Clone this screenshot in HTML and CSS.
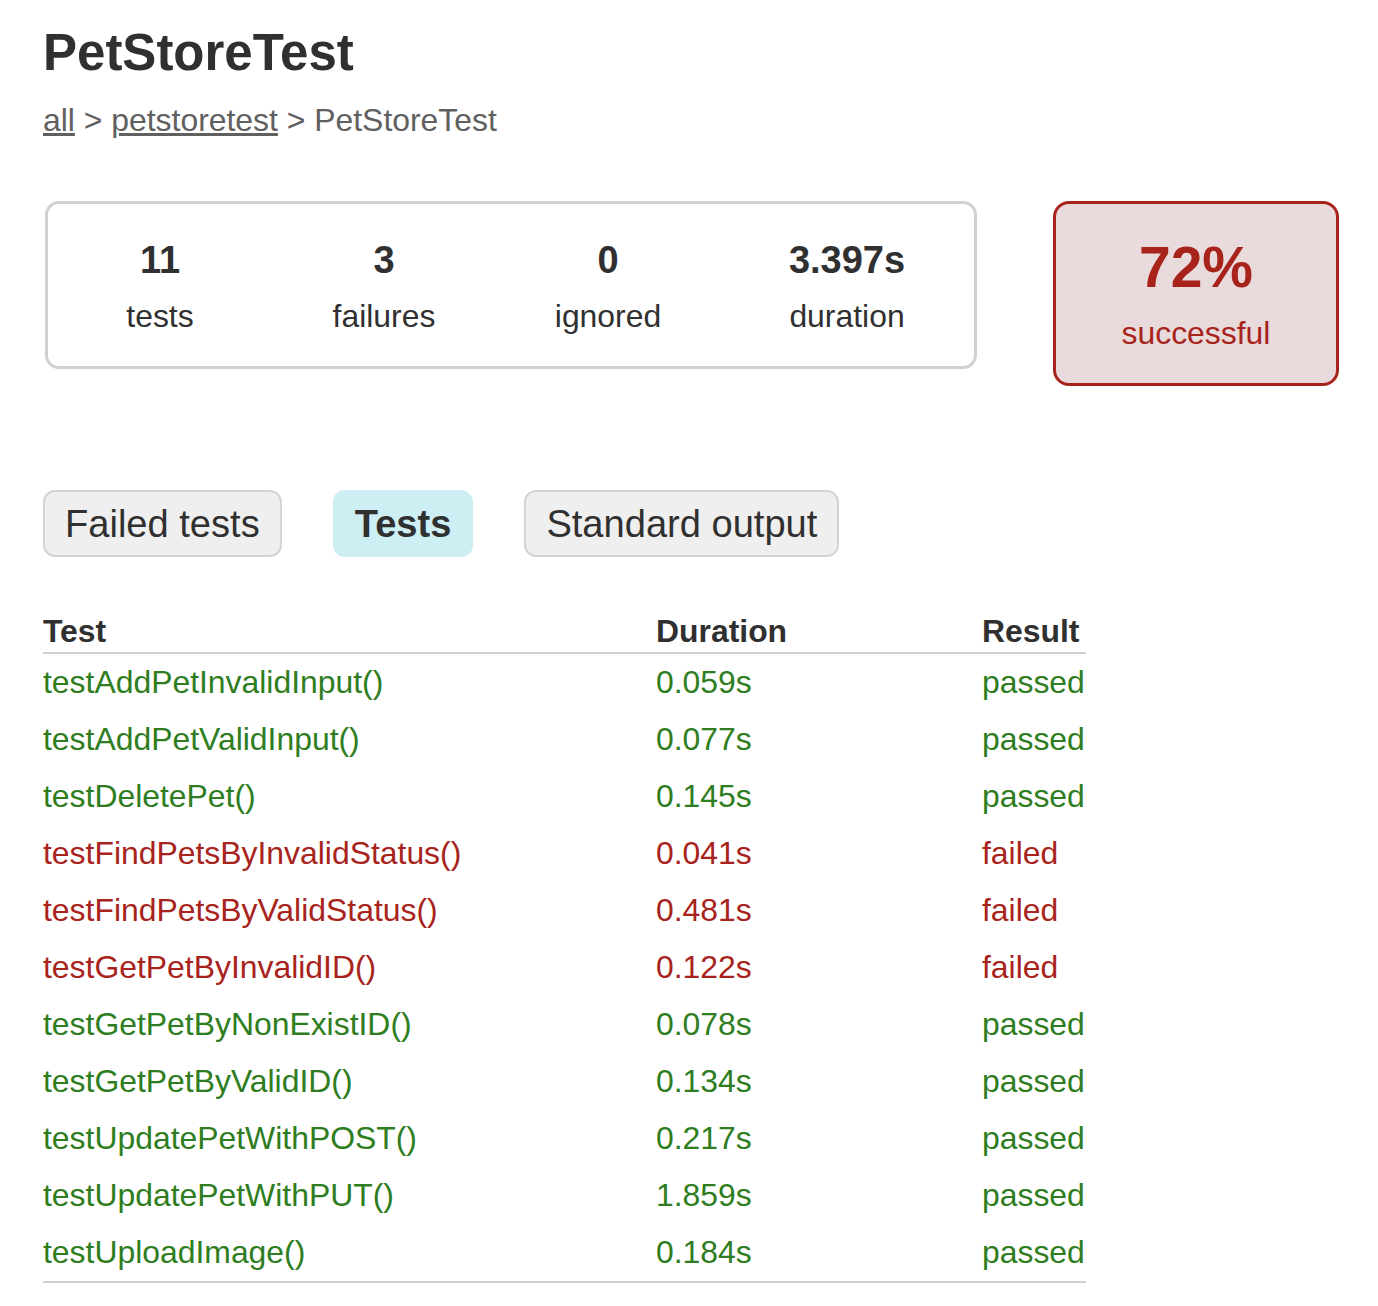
FILE: index.html
```html
<!DOCTYPE html>
<html lang="en">
<head>
<meta charset="utf-8">
<title>Test results - PetStoreTest</title>
<link rel="stylesheet" href="styles.css">
</head>
<body>
<div class="content">
  <h1 class="title">PetStoreTest</h1>
  <div class="breadcrumbs"><a href="#">all</a> &gt; <a href="#">petstoretest</a> &gt; PetStoreTest</div>

  <div class="summary">
    <div class="summary-group">
      <div class="info-box">
        <p class="counter">11</p>
        <p class="label">tests</p>
      </div>
      <div class="info-box">
        <p class="counter">3</p>
        <p class="label">failures</p>
      </div>
      <div class="info-box">
        <p class="counter">0</p>
        <p class="label">ignored</p>
      </div>
      <div class="info-box duration">
        <p class="counter">3.397s</p>
        <p class="label">duration</p>
      </div>
    </div>
    <div class="success-rate">
      <p class="percent">72%</p>
      <p class="label">successful</p>
    </div>
  </div>

  <ul class="tabs">
    <li class="tab">Failed tests</li>
    <li class="tab selected">Tests</li>
    <li class="tab">Standard output</li>
  </ul>

  <table class="tests">
    <thead>
      <tr><th class="col-test">Test</th><th class="col-duration">Duration</th><th class="col-result">Result</th></tr>
    </thead>
    <tbody>
      <tr class="success"><td>testAddPetInvalidInput()</td><td>0.059s</td><td>passed</td></tr>
      <tr class="success"><td>testAddPetValidInput()</td><td>0.077s</td><td>passed</td></tr>
      <tr class="success"><td>testDeletePet()</td><td>0.145s</td><td>passed</td></tr>
      <tr class="failures"><td>testFindPetsByInvalidStatus()</td><td>0.041s</td><td>failed</td></tr>
      <tr class="failures"><td>testFindPetsByValidStatus()</td><td>0.481s</td><td>failed</td></tr>
      <tr class="failures"><td>testGetPetByInvalidID()</td><td>0.122s</td><td>failed</td></tr>
      <tr class="success"><td>testGetPetByNonExistID()</td><td>0.078s</td><td>passed</td></tr>
      <tr class="success"><td>testGetPetByValidID()</td><td>0.134s</td><td>passed</td></tr>
      <tr class="success"><td>testUpdatePetWithPOST()</td><td>0.217s</td><td>passed</td></tr>
      <tr class="success"><td>testUpdatePetWithPUT()</td><td>1.859s</td><td>passed</td></tr>
      <tr class="success"><td>testUploadImage()</td><td>0.184s</td><td>passed</td></tr>
    </tbody>
  </table>
</div>
</body>
</html>
```

FILE: styles.css
```css
html, body {
  margin: 0;
  padding: 0;
  background: #ffffff;
}

body {
  font-family: "Liberation Sans", Arial, Helvetica, sans-serif;
  font-size: 31.9px;
  line-height: 38px;
  color: #303030;
}

.content {
  padding: 23px 43px 30px 43px;
}

.title {
  margin: 0;
  font-size: 51px;
  line-height: 60px;
  font-weight: bold;
  color: #303030;
}

.breadcrumbs {
  margin-top: 18px;
  color: #606060;
}

.breadcrumbs a {
  color: #606060;
  text-decoration: underline;
}

.summary {
  display: flex;
  align-items: flex-start;
  margin-top: 62px;
  padding-left: 2px;
}

.summary-group {
  display: flex;
  flex-shrink: 0;
  width: 932px;
  box-sizing: border-box;
  border: 3px solid #d0d0d0;
  border-radius: 14px;
}

.info-box {
  width: 224px;
  padding-top: 34px;
  padding-bottom: 31px;
  text-align: center;
}

.info-box.duration {
  width: 254px;
}

.info-box p,
.success-rate p {
  margin: 0;
}

.counter {
  font-size: 38px;
  line-height: 44px;
  font-weight: bold;
  margin-bottom: 15px !important;
}

.label {
  font-size: 31.9px;
  line-height: 38px;
}

.success-rate {
  flex-shrink: 0;
  width: 286px;
  box-sizing: border-box;
  margin-left: 76px;
  padding-top: 30px;
  padding-bottom: 31px;
  text-align: center;
  border: 3px solid #a8231c;
  border-radius: 16px;
  background: #e9dbdb;
  color: #a8231c;
}

.percent {
  font-size: 57px;
  line-height: 66px;
  font-weight: bold;
  margin-bottom: 14px !important;
}

.tabs {
  display: flex;
  gap: 51px;
  list-style: none;
  margin: 104px 0 0 0;
  padding: 0;
}

.tab {
  font-size: 38.1px;
  line-height: 44px;
  padding: 9.5px 20px;
  border: 2px solid #d4d4d4;
  border-radius: 12px;
  background: #efefef;
  color: #303030;
}

.tab.selected {
  font-weight: bold;
  background: #cdeef3;
  border-color: #cdeef3;
}

.tests {
  margin-top: 55px;
  border-collapse: collapse;
  width: 1043px;
}

.tests th,
.tests td {
  text-align: left;
  padding: 0;
  white-space: nowrap;
}

.tests th {
  font-weight: bold;
  color: #303030;
  padding-bottom: 2px;
  border-bottom: 2px solid #d0d0d0;
}

.tests td {
  padding-top: 9px;
  padding-bottom: 10px;
}

.tests tbody tr:last-child td {
  border-bottom: 2px solid #d0d0d0;
}

.col-test {
  width: 613px;
}

.col-duration {
  width: 326px;
}

.col-result {
  width: 104px;
}

.success td {
  color: #2e7d20;
}

.failures td {
  color: #a8231c;
}
```
